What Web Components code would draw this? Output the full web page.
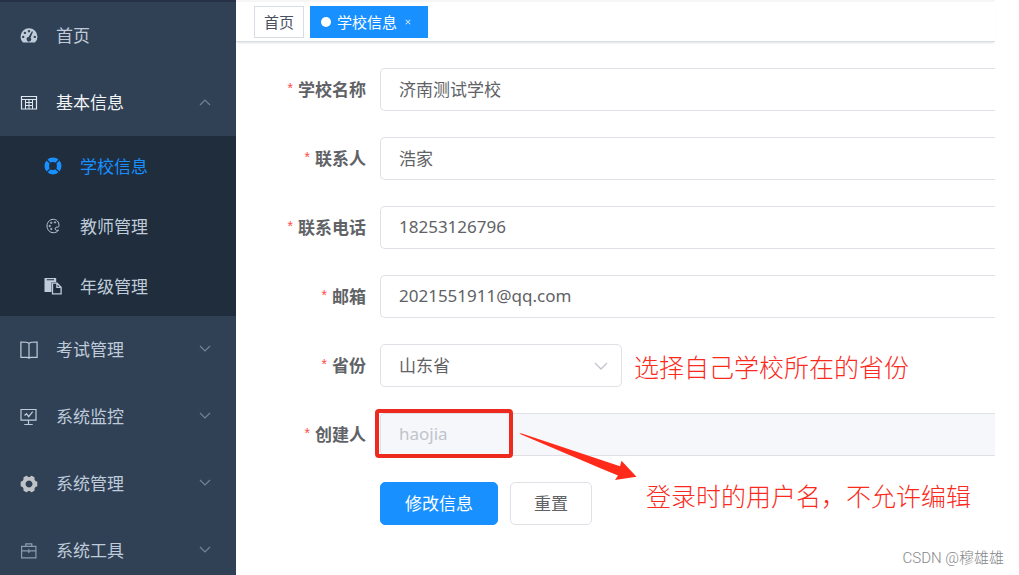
<!DOCTYPE html>
<html lang="zh-CN">
<head>
<meta charset="utf-8">
<title>学校信息</title>
<style>
  html, body { margin: 0; height: 100%; }
  body {
    overflow: hidden;
    background: #fff;
    color: #606266;
    font: 17px/24px "Noto Sans", "Noto Sans CJK SC", sans-serif;
    --primary: #1890ff;
    --line: #dfe1e6;
    --note: #fb2a1c;
  }
</style>
</head>
<body>
<app-shell>
  <side-menu slot="side">
    <menu-item icon="dashboard">首页</menu-item>
    <menu-item icon="table" arrow="up" open>基本信息</menu-item>
    <sub-menu>
      <menu-item icon="ring" active sub>学校信息</menu-item>
      <menu-item icon="palette" sub>教师管理</menu-item>
      <menu-item icon="copy" sub>年级管理</menu-item>
    </sub-menu>
    <menu-item icon="book" arrow="down">考试管理</menu-item>
    <menu-item icon="monitor" arrow="down">系统监控</menu-item>
    <menu-item icon="gear" arrow="down">系统管理</menu-item>
    <menu-item icon="case" arrow="down">系统工具</menu-item>
  </side-menu>
  <tags-bar slot="tags">
    <page-tag>首页</page-tag>
    <page-tag active>学校信息</page-tag>
  </tags-bar>
  <school-form>
    <form-field label="学校名称" value="济南测试学校"></form-field>
    <form-field label="联系人" value="浩家"></form-field>
    <form-field label="联系电话" value="18253126796"></form-field>
    <form-field label="邮箱" value="2021551911@qq.com"></form-field>
    <form-field label="省份" value="山东省" type="select"><red-note>选择自己学校所在的省份</red-note></form-field>
    <form-field label="创建人" value="haojia" disabled>
      <callout-arrow>登录时的用户名，不允许编辑</callout-arrow>
    </form-field>
    <form-actions></form-actions>
  </school-form>
  <page-mark slot="mark">CSDN @穆雄雄</page-mark>
</app-shell>

<script>
const ICONS = {
  dashboard: '<path fill="currentColor" fill-rule="evenodd" d="M3 15.5A8.3 8.3 0 0 1 .5 9.700a8.500 8.500 0 0 1 17 0 8.300 8.300 0 0 1-2.500 5.800zM9 3a1.200 1.200 0 1 0 .01 0zM4.900 4.700a1.200 1.200 0 1 0 .01 0zM3.200 8.700a1.200 1.200 0 1 0 .01 0zM14.800 8.700a1.200 1.200 0 1 0 .01 0zM11.900 4.300 8.600 10.100a2.200 2.200 0 1 0 1.900 .7l2.500-6z"/>',
  table: '<g fill="none" stroke="currentColor" stroke-width="1"><path d="M1.500 2.500h15v12.500h-15z" stroke-width="1.200"/><path d="M1.500 5.500h15"/><path d="M5 8.500h8M5 11.500h8M5.500 5.500v9.500M9 5.500v9.500M12.500 5.500v9.500"/></g>',
  ring: '<circle cx="9" cy="9" r="6.200" fill="none" stroke="currentColor" stroke-width="4.600"/><path d="m2 2 4.500 4.500M16 2l-4.500 4.500M2 16l4.500-4.500M16 16l-4.500-4.500" stroke="#1f2d3d" stroke-width="1.300"/>',
  palette: '<g fill="none" stroke="currentColor" stroke-width="1"><path d="M15 8.500C15 4.700 12.500 2.300 9.300 2.300 5.700 2.300 3 5.200 3 9s2.900 6.700 6.200 6.700c1.600 0 4.200-.4 5.300-2.700-1.400.7-3.200.4-3.300-1.200-.1-1.800 1.700-1.700 2.600-1.700.8 0 1.200-.6 1.200-1.600z"/><circle cx="7.200" cy="5.800" r=".7"/><circle cx="11" cy="5.400" r=".7"/><circle cx="5.700" cy="9" r=".7"/><circle cx="7.300" cy="12" r=".7"/></g>',
  copy: '<path fill="currentColor" fill-rule="evenodd" d="M.5 1h11.700v4.200H7.500V15H.5zM2.800 2.200v1h7.200v-1z"/><path fill="none" stroke="currentColor" stroke-width="1.300" d="M8.500 6.200h4.600l4 4v6.600H8.500zM12.900 6.200v4.200h4.200"/>',
  book: '<path fill="none" stroke="currentColor" stroke-width="1.200" d="M9 2.300C8 1.300 6 1 .9 1v15.300H7c1 0 1.600.2 2 .8.4-.6 1-.8 2-.8h6.100V1C12 1 10 1.300 9 2.300zM9 2.300v14.800"/>',
  monitor: '<path fill="none" stroke="currentColor" stroke-width="1.200" d="M1 1.500h15v10.700H1zM8.500 12.500v4M4.300 16.500h8.400M4.500 7.500l2-1.800 2.200 3 4-5"/>',
  gear: '<path fill="#bfc3c5" fill-rule="evenodd" d="M5.700 1.100 7 .7l1 1.300h2l1-1.300 1.300.4 2.300 1.400-.1 2 1 1.600 1.800.7v4.400l-1.800.7-1 1.600.1 2-2.300 1.400-1.300.4-1-1.300H8l-1 1.300-1.300-.4-2.300-1.400.1-2-1-1.600-1.800-.7V6.800l1.800-.7 1-1.600-.1-2zM9 5.500a3.500 3.500 0 1 0 .01 0z"/>',
  case: '<path opacity=".65" fill="none" stroke="currentColor" stroke-width="1.200" d="M1.600 4.300h14.300v11.500H1.600zM5.800 4.300V1.900h6v2.400M1.600 8.900h5.600M10.300 8.900h5.600M8.800 7v4M7.300 9.200h3"/>'
};

function define(name, css, html) {
  customElements.define(name, class extends HTMLElement {
    constructor() {
      super();
      this.attachShadow({ mode: 'open' });
    }
    connectedCallback() {
      const body = typeof html === 'function' ? html(this) : html;
      this.shadowRoot.innerHTML = `<style>*{box-sizing:border-box}${css}</style>${body}`;
    }
  });
}

define('app-shell', `
  :host { display: grid; grid-template-columns: 236px 1fr; height: 100vh; position: relative; overflow: hidden; }
  main { padding-right: 24px; min-width: 0; }
`, `<slot name="side"></slot><main><slot name="tags"></slot><slot></slot></main><slot name="mark"></slot>`);

define('side-menu', `
  :host { display: block; background: #304156; border-top: 2px solid #263145; min-height: 0; overflow: hidden; }
  nav { display: flex; flex-direction: column; }
`, `<nav aria-label="主菜单"><slot></slot></nav>`);

define('sub-menu', `
  :host { display: flex; flex-direction: column; background: #1f2d3d; }
`, `<slot></slot>`);

define('menu-item', `
  :host { display: block; color: #bfcbd9; }
  :host([open]) { color: #f4f4f5; }
  :host([active]) { color: var(--primary); }
  a { display: flex; align-items: center; gap: 18px; height: 67px; padding: 0 25px 0 20px; color: inherit; text-decoration: none; }
  :host([sub]) a { height: 60px; padding-left: 44px; }
  .icon { width: 18px; height: 18px; flex: none; }
  :host([open]) .icon { color: #dfe6ee; }
  .text { flex: 1; }
  :host([sub]) .text { padding-top: 2px; }
  .arrow { width: 12px; height: 12px; flex: none; color: #738295; }
`, el => {
  const arrow = el.getAttribute('arrow');
  const d = arrow === 'up' ? 'M1 8l5-5 5 5' : 'M1 2l5 5 5-5';
  return `<a href="#"><svg class="icon" viewBox="0 0 18 18" aria-hidden="true">${ICONS[el.getAttribute('icon')]}</svg>
    <span class="text"><slot></slot></span>${arrow ? `<svg class="arrow" viewBox="0 0 12 12" aria-hidden="true"><path d="${d}" fill="none" stroke="currentColor" stroke-width="1.200"/></svg>` : ''}</a>`;
});

define('tags-bar', `
  :host { display: flex; gap: 6px; height: 42px; padding: 4px 18px 0; border-top: 2px solid #f6f6f7; border-bottom: 1px solid #d8dce5; box-shadow: 0 2px 2px -1px #0000001f; box-sizing: border-box; }
`, `<slot></slot>`);

define('page-tag', `
  :host { display: block; }
  a { display: flex; align-items: center; height: 32px; padding: 0 9px; border: 1px solid #d8dce5; color: #495060; font-size: 15px; text-decoration: none; }
  :host([active]) a { background: var(--primary); border-color: var(--primary); color: #fff; padding: 0 16px 0 10px; }
  .dot { width: 10px; height: 10px; border-radius: 50%; background: #fff; margin-right: 6px; }
  svg { width: 6px; height: 6px; margin-left: 8px; }
`, el => el.hasAttribute('active')
  ? `<a href="#"><span class="dot"></span><slot></slot><svg viewBox="0 0 8 8" aria-hidden="true"><path d="M1 1l6 6M7 1L1 7" stroke="#d6eaff" stroke-width="1.400"/></svg></a>`
  : `<a href="#"><slot></slot></a>`);

define('school-form', `
  :host { display: block; padding-top: 25px; }
  form { display: flex; flex-direction: column; gap: 26px; padding-top: 1px; }
`, `<form><slot></slot></form>`);

define('form-field', `
  :host { display: grid; grid-template-columns: 130px 1fr; column-gap: 14px; align-items: center; }
  label { text-align: right; font-weight: 700; white-space: nowrap; }
  label::before { content: "*"; color: #ff4949; font: 14px/14px "Liberation Sans", sans-serif; margin-right: 5px; vertical-align: 3px; }
  .control { display: flex; align-items: center; gap: 12px; position: relative; min-width: 0; }
  input, select { font: inherit; color: inherit; height: 43px; margin: 0; padding: 0 18px; border: 1px solid var(--line); background: #fff; outline: 0; }
  input { flex: 1; min-width: 0; padding-bottom: 2px; border-right: 0; border-radius: 5px 0 0 5px; }
  input:disabled { background: #f5f7fa; color: #c0c4cc; }
  .pick { position: relative; flex: none; }
  select { display: block; appearance: none; width: 242px; border-radius: 5px; }
  .pick svg { position: absolute; right: 14px; top: 15px; width: 14px; height: 14px; pointer-events: none; }
`, el => {
  const v = el.getAttribute('value');
  const control = el.getAttribute('type') === 'select'
    ? `<span class="pick"><select id="c"><option>${v}</option></select><svg viewBox="0 0 14 14" aria-hidden="true"><path d="M1 4l6 6 6-6" fill="none" stroke="#c0c4cc" stroke-width="1.300"/></svg></span>`
    : `<input id="c" type="text" value="${v}"${el.hasAttribute('disabled') ? ' disabled' : ''}>`;
  return `<label for="c">${el.getAttribute('label')}</label><div class="control">${control}<slot></slot></div>`;
});

define('red-note', `
  :host { display: block; color: var(--note); font-size: 25px; line-height: 36px; white-space: nowrap; font-weight: 300; padding-top: 2px; }
`, `<slot></slot>`);

/* Callout laid over the disabled field: frame, arrow and its remark */
define('callout-arrow', `
  :host { position: absolute; left: -5px; top: -4px; width: 600px; height: 110px; pointer-events: none; }
  .frame { width: 138px; height: 49px; border: 4px solid #ee2a1f; border-radius: 4px; }
  svg { position: absolute; left: 144px; top: 23px; width: 120px; height: 50px; }
  red-note { position: absolute; left: 271px; top: 67px; }
`, `<div class="frame"></div>
  <svg viewBox="0 0 120 50" aria-hidden="true"><path fill="#ff2a1a" d="M.5 1.800 2 1.200l99 33 1.500-5.500 15 16L96 48l3-4.500-17-7z"/></svg>
  <red-note><slot></slot></red-note>`);

define('form-actions', `
  :host { display: flex; gap: 12px; padding-left: 144px; }
  button { height: 43px; padding: 0 23px; border: 1px solid var(--line); border-radius: 5px; background: #fff; color: inherit; font: inherit; }
  .main { padding: 0 24px; background: var(--primary); border-color: var(--primary); color: #fff; }
`, `<button class="main" type="button">修改信息</button><button type="button">重置</button>`);

define('page-mark', `
  :host { position: absolute; right: 15px; bottom: 6px; color: #85878a; font: 15px/22px Roboto, "Noto Sans CJK SC", sans-serif; font-weight: 300; }
`, `<slot></slot>`);
</script>
</body>
</html>
